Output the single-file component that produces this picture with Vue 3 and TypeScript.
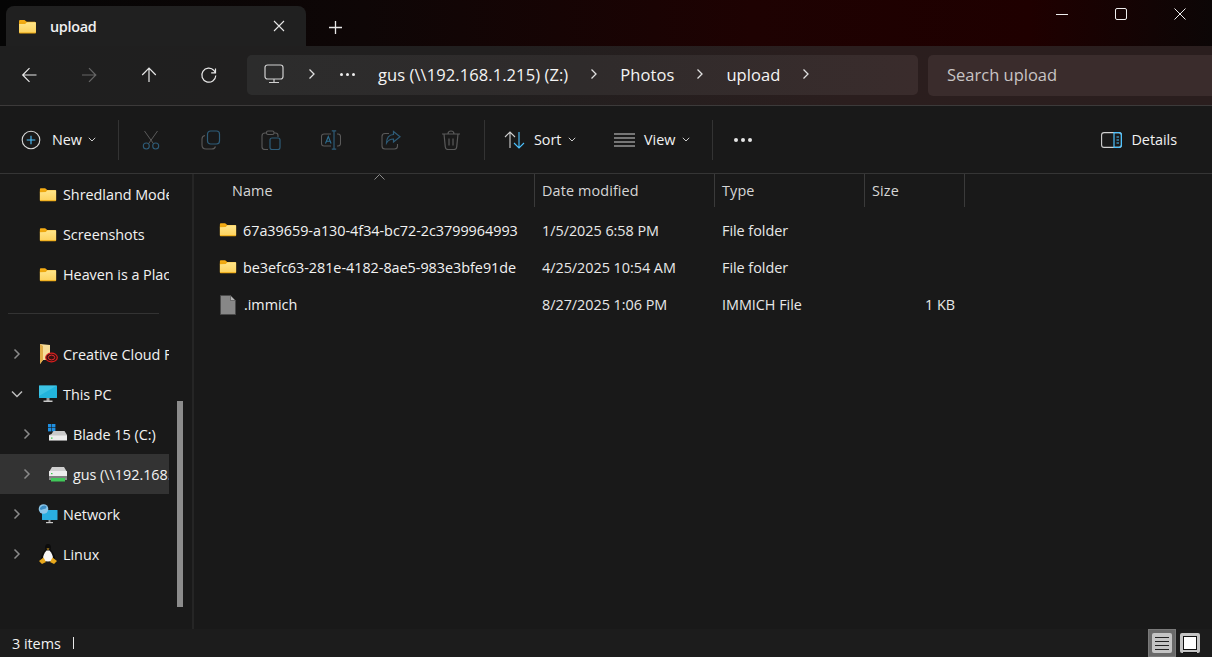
<script setup lang="ts">
interface NavRow { label: string; icon: string; chevron?: 'right' | 'down'; indent?: boolean; selected?: boolean }
interface FileRow { name: string; date: string; type: string; size: string; icon: string }

const topNav: NavRow[] = [
  { label: 'Shredland Models', icon: 'folder' },
  { label: 'Screenshots', icon: 'folder' },
  { label: 'Heaven is a Place', icon: 'folder' },
]
const lowerNav: NavRow[] = [
  { label: 'Creative Cloud Files', icon: 'cloud', chevron: 'right' },
  { label: 'This PC', icon: 'pc', chevron: 'down' },
  { label: 'Blade 15 (C:)', icon: 'cdrive', chevron: 'right', indent: true },
  { label: 'gus (\\\\192.168.1.215) (Z:)', icon: 'netdrive', chevron: 'right', indent: true, selected: true },
  { label: 'Network', icon: 'network', chevron: 'right' },
  { label: 'Linux', icon: 'linux', chevron: 'right' },
]
const files: FileRow[] = [
  { name: '67a39659-a130-4f34-bc72-2c3799964993', date: '1/5/2025 6:58 PM', type: 'File folder', size: '', icon: 'folder' },
  { name: 'be3efc63-281e-4182-8ae5-983e3bfe91de', date: '4/25/2025 10:54 AM', type: 'File folder', size: '', icon: 'folder' },
  { name: '.immich', date: '8/27/2025 1:06 PM', type: 'IMMICH File', size: '1 KB', icon: 'file' },
]
const crumbs = ['gus (\\\\192.168.1.215) (Z:)', 'Photos', 'upload']
</script>

<template>
  <div class="window">
    <svg class="defs" width="0" height="0" aria-hidden="true">
      <defs>
        <linearGradient id="fg" x1="0" y1="0" x2="0" y2="1">
          <stop offset="0" stop-color="#ffe58a" />
          <stop offset="1" stop-color="#fdd35f" />
        </linearGradient>
        <symbol id="folder" viewBox="0 0 20 16">
          <path d="M1 2.200C1 1.500 1.500 1 2.200 1h4.600l2.400 2H18v3H1z" fill="#f5ac14" />
          <rect x="1" y="3.400" width="18" height="12" rx=".8" fill="#eda70f" />
          <path d="M1 5.400l6.500-.2L9.300 3.400H19v11H1z" fill="url(#fg)" />
        </symbol>
        <symbol id="file" viewBox="0 0 16 20">
          <path d="M.5.500h10l5 5v14H.5z" fill="#878787" stroke="#4a4a4a" />
          <path d="M10.500.500v5h5z" fill="#b5b5b5" stroke="#4a4a4a" stroke-width=".6" />
        </symbol>
        <symbol id="cloud" viewBox="0 0 20 20">
          <path d="M2 0l10 1v15H5l-3 4z" fill="#f6dc9a" />
          <path d="M2 0l3 2v14l-3 4z" fill="#e2ad48" />
          <ellipse cx="13.500" cy="13.500" rx="5.800" ry="4.400" fill="#3a1010" stroke="#dc1f1f" stroke-width="1.200" />
          <ellipse cx="13.500" cy="13.500" rx="3.200" ry="2.400" fill="none" stroke="#e03030" stroke-width="1" />
        </symbol>
        <symbol id="pc" viewBox="0 0 20 20">
          <rect x="1" y="1.500" width="18" height="12.500" rx=".6" fill="#22b4dc" />
          <path d="M1 1.500h18L1 12z" fill="#4fcdea" opacity=".6" />
          <rect x="8.500" y="14" width="3" height="3" fill="#999" />
          <rect x="5.500" y="16.500" width="9" height="1.500" fill="#c8c8c8" />
        </symbol>
        <symbol id="cdrive" viewBox="0 0 20 20">
          <rect x="0" y="0" width="3.400" height="3.400" fill="#1f8fe0" />
          <rect x="4" y="0" width="3.400" height="3.400" fill="#1f8fe0" />
          <rect x="0" y="4" width="3.400" height="3.400" fill="#1f8fe0" />
          <rect x="4" y="4" width="3.400" height="3.400" fill="#1f8fe0" />
          <path d="M3.500 10l2-3h11l2.500 4v2H1v-2z" fill="#c9c9c9" />
          <rect x="1" y="11.500" width="18" height="5" rx=".5" fill="#ececec" />
          <rect x="3" y="13.500" width="1.500" height="1.200" fill="#3bcc4a" />
          <rect x="1" y="16" width="18" height="1" fill="#8c8c8c" />
        </symbol>
        <symbol id="netdrive" viewBox="0 0 20 20">
          <path d="M4 3h12l3 5v4H1V8z" fill="#cfcfcf" />
          <rect x="1" y="7" width="18" height="5" rx=".5" fill="#ededed" />
          <rect x="3" y="9" width="1.500" height="1.200" fill="#3bcc4a" />
          <rect x="1" y="12" width="18" height="2" fill="#7f7f7f" />
          <rect x="3" y="14" width="14" height="3.500" fill="#41c95a" />
          <rect x="1" y="14" width="2" height="2" fill="#8d8d8d" />
          <rect x="17" y="14" width="2" height="2" fill="#8d8d8d" />
        </symbol>
        <symbol id="network" viewBox="0 0 20 20">
          <rect x="4" y="6" width="15.500" height="10" rx=".5" fill="#2aaee0" />
          <rect x="10.500" y="16" width="2" height="2" fill="#999" />
          <rect x="8" y="18" width="7" height="1.200" fill="#c8c8c8" />
          <circle cx="5.500" cy="5" r="4.800" fill="#8cc6e8" />
          <path d="M2 4c2-3 5-3 6-2s0 3-2 3-3 2-4 0z" fill="#3c8ec5" />
        </symbol>
        <symbol id="linux" viewBox="0 0 20 20">
          <ellipse cx="10" cy="3.800" rx="3" ry="3.800" fill="#0c0c0c" />
          <path d="M7 6c-2 2-4 5-4 8 0 2 1 3 2 3h10c1 0 2-1 2-3 0-3-2-6-4-8z" fill="#0c0c0c" />
          <path d="M8.500 6.500h3c2 2 3.500 5 3.500 8 0 2-1.500 3-5 3s-5-1-5-3c0-3 1.500-6 3.500-8z" fill="#f7f7f7" />
          <path d="M8.500 4.500h3L10 6z" fill="#eeb022" />
          <path d="M1 17l4.500-3.500L8 18l-4 2zM19 17l-4.500-3.500L12 18l4 2z" fill="#e8a81c" />
        </symbol>
      </defs>
    </svg>

    <header class="titlebar">
      <div class="tab">
        <svg class="tab-folder" width="19" height="15"><use href="#folder" /></svg>
        <span class="tab-title">upload</span>
        <svg class="tab-close" width="12" height="12" viewBox="0 0 12 12"><path d="M1 1l10 10M11 1L1 11" stroke="#e6e6e6" stroke-width="1.100" fill="none" /></svg>
      </div>
      <svg class="tab-add" width="13" height="13" viewBox="0 0 13 13"><path d="M6.500 0v13M0 6.500h13" stroke="#e8e8e8" stroke-width="1.300" fill="none" /></svg>
      <div class="win-controls">
        <svg width="12" height="12" viewBox="0 0 12 12"><path d="M0 6.500h12" stroke="#eee" stroke-width="1" /></svg>
        <svg width="12" height="12" viewBox="0 0 12 12"><rect x=".5" y=".5" width="11" height="11" rx="1.500" fill="none" stroke="#eee" /></svg>
        <svg width="12" height="12" viewBox="0 0 12 12"><path d="M.5.500l11 11M11.500.500l-11 11" stroke="#eee" fill="none" /></svg>
      </div>
    </header>

    <section class="addressrow">
      <div class="nav-buttons">
        <svg class="nav-icon" width="18" height="18" viewBox="0 0 18 18"><path d="M16.500 9H3M9.500 2.200L2.700 9l6.800 6.800" stroke="#e8e8e8" stroke-width="1.200" fill="none" /></svg>
        <svg class="nav-icon" width="18" height="18" viewBox="0 0 18 18"><path d="M2 9h13.500M9 2.200L15.800 9 9 15.800" stroke="#666" stroke-width="1.200" fill="none" /></svg>
        <svg class="nav-icon" width="18" height="18" viewBox="0 0 18 18"><path d="M9 16V2.500M2.200 9L9 2.200 15.800 9" stroke="#e8e8e8" stroke-width="1.200" fill="none" /></svg>
        <svg class="nav-icon" width="18" height="18" viewBox="0 0 18 18"><path d="M15.500 2.500v4.300h-4.300M15.800 9.500A7 7 0 1 1 14 4.500l1.300 2" stroke="#e8e8e8" stroke-width="1.200" fill="none" /></svg>
      </div>
      <div class="addressbar">
        <svg class="pc-icon" width="20" height="20" viewBox="0 0 20 20"><rect x="1" y="1" width="18" height="14" rx="2.500" fill="none" stroke="#d0d0d0" stroke-width="1.200" /><path d="M10 15v3M5 18.500h10" stroke="#d0d0d0" stroke-width="1.200" /></svg>
        <svg class="crumb-sep first" width="8" height="12" viewBox="0 0 8 12"><path d="M1.500 1.500L6 6l-4.500 4.500" stroke="#e0e0e0" stroke-width="1.300" fill="none" /></svg>
        <div class="crumb-more"><b></b><b></b><b></b></div>
        <template v-for="c in crumbs" :key="c">
          <span class="crumb">{{ c }}</span>
          <svg class="crumb-sep" width="8" height="12" viewBox="0 0 8 12"><path d="M1.500 1.500L6 6l-4.500 4.500" stroke="#e0e0e0" stroke-width="1.300" fill="none" /></svg>
        </template>
      </div>
      <div class="search">Search upload</div>
    </section>

    <section class="toolbar">
      <div class="tool text-tool new-tool">
        <svg width="20" height="20" viewBox="0 0 20 20"><circle cx="10" cy="10" r="8.800" fill="none" stroke="#d8d8d8" stroke-width="1.100" /><path d="M10 5.700v8.600M5.700 10h8.600" stroke="#4cc2ff" stroke-width="1.100" /></svg>
        <span>New</span>
        <svg class="chev" width="8" height="5" viewBox="0 0 8 5"><path d="M.8.800L4 4l3.200-3.200" stroke="#ccc" fill="none" /></svg>
      </div>
      <i class="sep sep-first"></i>
      <div class="disabled-icons">
        <svg width="20" height="20" viewBox="0 0 20 20"><path d="M3.500 1l9.200 13M16.500 1L7.300 14" stroke="#5a5a5a" fill="none" /><circle cx="5.300" cy="16" r="3" fill="none" stroke="#2e5c78" stroke-width="1.100" /><circle cx="14.700" cy="16" r="3" fill="none" stroke="#2e5c78" stroke-width="1.100" /></svg>
        <svg width="20" height="20" viewBox="0 0 20 20"><path d="M4 5.500c-1.700.3-3 1.500-3 3.500v6c0 2.300 1.700 4 4 4h6c1.800 0 3-1 3.500-2.500" fill="none" stroke="#5a5a5a" stroke-width="1.100" /><rect x="6.500" y="1" width="12" height="13" rx="3" fill="none" stroke="#2e5c78" stroke-width="1.200" /></svg>
        <svg width="20" height="20" viewBox="0 0 20 20"><path d="M5.500 3H4C2.300 3 1 4.300 1 6v11c0 1.700 1.300 2.500 3 2.500h3M13 3h1.500c1.300 0 2.500 1.200 2.500 2.500V7" fill="none" stroke="#5a5a5a" stroke-width="1.100" /><rect x="5.500" y="1" width="7.500" height="3.500" rx="1.500" fill="none" stroke="#5a5a5a" stroke-width="1.100" /><rect x="9" y="8" width="10" height="11.500" rx="2" fill="none" stroke="#2e5c78" stroke-width="1.200" /></svg>
        <svg width="20" height="20" viewBox="0 0 20 20"><path d="M10 4H3C1.700 4 .5 5 .5 6.500v7C.5 15 1.700 16 3 16h7M16 4h1c1.300 0 2.500 1 2.500 2.500v7c0 1.500-1.200 2.500-2.500 2.500h-1" fill="none" stroke="#5a5a5a" stroke-width="1.100" /><path d="M13 .8v18.400M10.800.8h4.400M10.800 19.200h4.400" fill="none" stroke="#2e5c78" stroke-width="1.200" /><path d="M4.500 13.500L7.300 6.500l2.800 7M5.500 11.200h3.600" fill="none" stroke="#2e6f92" stroke-width="1.100" /></svg>
        <svg width="20" height="20" viewBox="0 0 20 20"><path d="M8 3.500H4C2.300 3.500 1 4.800 1 6.500V16c0 1.700 1.300 3 3 3h9.500c1.700 0 3-1.300 3-3v-2" fill="none" stroke="#5a5a5a" stroke-width="1.100" /><path d="M12.500 1.500l6.500 5.300-6.500 5.200V9C9 9 7 10.500 5.500 13c0-5 2.500-8.500 7-8.500z" fill="none" stroke="#2e5c78" stroke-width="1.200" /></svg>
        <svg width="20" height="20" viewBox="0 0 20 20"><path d="M1 4h18M7 4c0-1.700 1-3 3-3s3 1.300 3 3M3 4l1.300 13c.1 1.500 1.100 2.500 2.700 2.500h6c1.600 0 2.600-1 2.700-2.500L17 4M8 8.500v7M12 8.500v7" fill="none" stroke="#5a5a5a" stroke-width="1.200" /></svg>
      </div>
      <i class="sep sep-second"></i>
      <div class="tool text-tool sort-tool">
        <svg width="21" height="20" viewBox="0 0 21 20"><path d="M6 18V2M1 7l5-5 5 5" fill="none" stroke="#d0d0d0" stroke-width="1.100" /><path d="M15 2v16M10 13l5 5 5-5" fill="none" stroke="#4cc2ff" stroke-width="1.100" /></svg>
        <span>Sort</span>
        <svg class="chev" width="8" height="5" viewBox="0 0 8 5"><path d="M.8.800L4 4l3.200-3.200" stroke="#ccc" fill="none" /></svg>
      </div>
      <div class="tool text-tool view-tool">
        <svg width="21" height="14" viewBox="0 0 21 14"><path d="M0 1h21M0 5h21M0 9h21M0 13h21" stroke="#d4d4d4" stroke-width="1.100" /></svg>
        <span>View</span>
        <svg class="chev" width="8" height="5" viewBox="0 0 8 5"><path d="M.8.800L4 4l3.200-3.200" stroke="#ccc" fill="none" /></svg>
      </div>
      <i class="sep sep-third"></i>
      <div class="more-dots"><b></b><b></b><b></b></div>
      <div class="tool text-tool details-tool">
        <svg width="21" height="16" viewBox="0 0 21 16"><rect x=".6" y=".6" width="19.800" height="14.800" rx="2.500" fill="none" stroke="#d0d0d0" stroke-width="1.100" /><path d="M13 .6h5c1.500 0 2.400 1 2.400 2.500v10c0 1.500-.9 2.300-2.400 2.300h-5z" fill="none" stroke="#4cc2ff" stroke-width="1.200" /><path d="M15.500 5h2.500M15.500 8h2.500M15.500 11h2.500" stroke="#4cc2ff" /></svg>
        <span>Details</span>
      </div>
    </section>

    <main class="body">
      <aside class="sidebar">
        <div class="tree">
          <div v-for="r in topNav" :key="r.label" class="tree-row">
            <span class="tree-chev"></span>
            <svg class="tree-folder" width="18" height="15"><use href="#folder" /></svg>
            <span class="tree-label">{{ r.label }}</span>
          </div>
          <div class="tree-divider"></div>
          <div
            v-for="r in lowerNav"
            :key="r.label"
            class="tree-row"
            :class="{ indent: r.indent, selected: r.selected }"
          >
            <span class="tree-chev">
              <svg v-if="r.chevron === 'right'" width="8" height="12" viewBox="0 0 8 12"><path d="M1.500 1.500L6 6l-4.500 4.500" stroke="#8a8a8a" stroke-width="1.500" fill="none" /></svg>
              <svg v-else-if="r.chevron === 'down'" width="12" height="8" viewBox="0 0 12 8"><path d="M1 1.500L6 6.500l5-5" stroke="#bdbdbd" stroke-width="1.500" fill="none" /></svg>
            </span>
            <svg class="tree-icon" width="20" height="20"><use :href="'#' + r.icon" /></svg>
            <span class="tree-label">{{ r.label }}</span>
          </div>
        </div>
        <div class="scroll-thumb"></div>
      </aside>
      <section class="content">
        <div class="thead">
          <div class="th th-name">Name
            <svg class="sort-caret" width="11" height="6" viewBox="0 0 11 6"><path d="M.5 5.500l5-5 5 5" stroke="#8c8c8c" fill="none" /></svg>
          </div>
          <div class="th">Date modified</div>
          <div class="th">Type</div>
          <div class="th">Size</div>
          <div class="th th-end"></div>
        </div>
        <div class="rows">
          <div v-for="f in files" :key="f.name" class="tr">
            <div class="td td-name">
              <svg v-if="f.icon === 'folder'" class="row-folder" width="18" height="15"><use href="#folder" /></svg>
              <svg v-else class="row-file" width="16" height="20"><use href="#file" /></svg>
              <span>{{ f.name }}</span>
            </div>
            <div class="td td-date">{{ f.date }}</div>
            <div class="td td-type">{{ f.type }}</div>
            <div class="td td-size">{{ f.size }}</div>
          </div>
        </div>
      </section>
    </main>

    <footer class="statusbar">
      <span class="count">3 items</span>
      <i class="status-sep"></i>
      <div class="view-toggle">
        <div class="toggle active">
          <span class="tile lines"><b></b><b></b><b></b><b></b></span>
        </div>
        <div class="toggle">
          <span class="tile preview"><b></b></span>
        </div>
      </div>
    </footer>
  </div>
</template>

<style>
html, body { margin: 0; padding: 0; background: #191919; }
</style>

<style scoped>
.window {
  width: 1212px;
  height: 657px;
  display: flex;
  flex-direction: column;
  overflow: hidden;
  background: #191919;
  color: #f2f2f2;
  font-family: "Open Sans", "Noto Sans", sans-serif;
  font-size: 14.4px;
  letter-spacing: -0.03px;
}
.defs { display: block; flex: none; }
.titlebar {
  height: 46px;
  flex: none;
  display: flex;
  align-items: flex-start;
  padding-left: 6px;
  background: linear-gradient(90deg, #050505 0%, #0e0606 30%, #1e0202 62%, #1f0000 85%, #0c0606 100%);
}
.tab {
  width: 300px;
  height: 40px;
  margin-top: 6px;
  display: flex;
  align-items: center;
  box-sizing: border-box;
  padding: 0 21px 0 12px;
  background: #202020;
  border-radius: 8px 8px 0 0;
}
.tab-title { margin-left: 13px; font-size: 14.4px; font-weight: 600; color: #f0f0f0; letter-spacing: -0.3px; }
.tab-close { margin-left: auto; }
.tab-add { margin: 21px 0 0 23px; }
.win-controls {
  margin-left: auto;
  margin-top: 8px;
  padding-right: 26px;
  display: flex;
  gap: 47px;
}
.addressrow {
  height: 60px;
  flex: none;
  box-sizing: border-box;
  display: flex;
  align-items: center;
  padding-bottom: 1px;
  border-bottom: 1px solid #3c3a3a;
  background: linear-gradient(90deg, #1f1f1f 0%, #211f1f 40%, #2b1e1e 70%, #2a1e1e 100%);
}
.nav-buttons {
  width: 247px;
  flex: none;
  display: flex;
  gap: 42px;
  padding-left: 20px;
  box-sizing: border-box;
}
.addressbar {
  width: 671px;
  height: 40px;
  flex: none;
  display: flex;
  align-items: center;
  box-sizing: border-box;
  padding-left: 17px;
  padding-bottom: 2px;
  border-radius: 5px;
  background: linear-gradient(90deg, #2c2c2c 0%, #2f2b2b 50%, #3a2c2c 100%);
  font-size: 16.5px;
  letter-spacing: 0.08px;
  color: #f4f4f4;
}
.crumb-sep { flex: none; margin: 0 22px; }
.crumb-sep.first { margin: 0 24px 0 24px; }
.crumb-more { display: flex; gap: 3px; margin-right: 23px; }
.crumb-more b { display: block; width: 3px; height: 3px; border-radius: 50%; background: #eee; }
.search {
  width: 284px;
  height: 41px;
  margin-left: 10px;
  flex: none;
  display: flex;
  align-items: center;
  box-sizing: border-box;
  padding-left: 19px;
  padding-bottom: 2px;
  border-radius: 5px 0 0 5px;
  background: #3a2c2c;
  color: #c8c4c4;
  font-size: 16.5px;
  letter-spacing: 0;
}
.toolbar {
  height: 68px;
  flex: none;
  box-sizing: border-box;
  display: flex;
  align-items: center;
  border-bottom: 1px solid #353535;
  padding-left: 21px;
  background: #191919;
}
.tool { display: flex; align-items: center; }
.new-tool { width: 97px; }
.new-tool span { margin-left: 11px; }
.new-tool .chev { margin-left: 6px; }
.sep { display: block; width: 1px; height: 40px; background: #333; flex: none; }
.disabled-icons { display: flex; gap: 40px; margin-left: 22px; }
.sep-second { margin-left: 23px; }
.sort-tool { margin-left: 19px; width: 110px; }
.sort-tool span { margin-left: 9px; }
.sort-tool .chev { margin-left: 7px; }
.view-tool { width: 77px; }
.view-tool span { margin-left: 9px; }
.view-tool .chev { margin-left: 7px; }
.sep-third { margin-left: 21px; }
.more-dots { display: flex; gap: 3px; margin-left: 21px; }
.more-dots b { width: 4px; height: 4px; border-radius: 50%; background: #e4e4e4; display: block; }
.details-tool { margin-left: auto; padding-right: 35px; }
.details-tool span { margin-left: 9px; }
.body { flex: 1; display: flex; min-height: 0; }
.sidebar {
  width: 194px;
  flex: none;
  position: relative;
  overflow: hidden;
  box-sizing: border-box;
  border-right: 2px solid #252525;
}
.tree { width: 169px; overflow: hidden; }
.tree-row {
  height: 40px;
  display: flex;
  align-items: center;
  white-space: nowrap;
  overflow: hidden;
}
.tree-row.selected { background: #333; }
.tree-chev { width: 34px; flex: none; display: flex; justify-content: center; }
.tree-folder { flex: none; margin-left: 5px; margin-right: 6px; }
.tree-icon { flex: none; margin-left: 4px; margin-right: 5px; }
.tree-row.indent { padding-left: 10px; }
.tree-label { flex: none; }
.tree-divider { height: 1px; margin: 19px 10px 20px 8px; background: #333; }
.scroll-thumb {
  position: absolute;
  left: 177px;
  top: 227px;
  width: 6px;
  height: 206px;
  background: #8c8c8c;
}
.content { flex: 1; min-width: 0; }
.thead, .tr {
  display: grid;
  grid-template-columns: 340px 180px 150px 100px 1px;
}
.thead { height: 33px; color: #d6d6d6; letter-spacing: 0.12px; }
.th {
  position: relative;
  box-sizing: border-box;
  height: 33px;
  display: flex;
  align-items: center;
  padding-left: 7px;
  border-left: 1px solid #3a3a3a;
}
.th-name { padding-left: 38px; border-left: none; }
.sort-caret { position: absolute; left: 180px; top: 0; }
.rows { padding-top: 5px; }
.tr { height: 37px; align-items: center; color: #e8e8e8; }
.td { white-space: nowrap; padding-left: 8px; box-sizing: border-box; }
.td-name { display: flex; align-items: center; padding-left: 25px; overflow: hidden; color: #f2f2f2; }
.td-name span { margin-left: 6px; }
.row-folder { margin-top: -2px; }
.row-file { margin: 0 2px 0 1px; }
.td-size { text-align: right; padding-right: 9px; }
.statusbar {
  height: 28px;
  flex: none;
  display: flex;
  align-items: center;
  padding-left: 12px;
  background: #1c1c1c;
}
.status-sep { display: block; width: 1px; height: 12px; background: #e8e8e8; margin-left: 12px; }
.view-toggle { margin-left: auto; margin-right: 8px; display: flex; align-items: center; }
.toggle { width: 28px; height: 28px; display: flex; align-items: center; justify-content: center; box-sizing: border-box; }
.toggle.active { background: #6a6a6a; border: 1px solid #7a7a7a; }
.tile { width: 20px; height: 20px; border-radius: 2px; background: #c4c4c4; display: flex; box-sizing: border-box; }
.lines { flex-direction: column; justify-content: center; gap: 3px; padding: 0 3px; }
.lines b { display: block; height: 1px; background: #222; }
.preview { flex-direction: column; padding: 3px 3px 0; }
.preview b { display: block; height: 12px; background: #fff; border: 1px solid #111; box-shadow: 0 2px 0 #c4c4c4, 0 3px 0 #111; }
</style>
